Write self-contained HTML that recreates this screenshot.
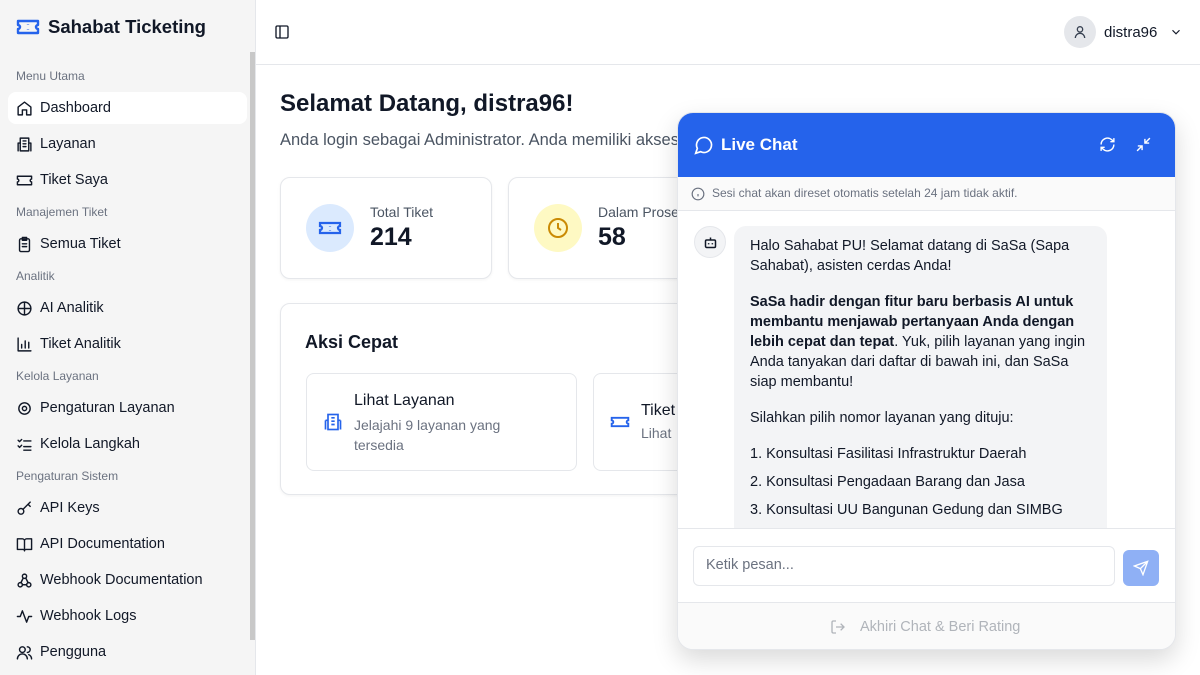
<!DOCTYPE html>
<html><head><meta charset="utf-8"><style>
*{box-sizing:border-box;margin:0;padding:0}
body{width:1200px;height:675px;overflow:hidden;font-family:"Liberation Sans",sans-serif;background:#fff;color:#111827;position:relative}
.sb{position:absolute;left:0;top:0;width:256px;height:675px;background:#f5f5f5;border-right:1px solid #e5e7eb}
.logo{position:absolute;left:16px;top:15px;font-size:18.5px;font-weight:bold;display:flex;align-items:center;gap:8px;color:#111827}
.scroll{position:absolute;left:250px;top:52px;width:5px;height:588px;background:#c8c8c8}
.sec{position:absolute;left:16px;font-size:12px;color:#6b7280}
.it{position:absolute;left:8px;width:239px;height:32px;display:flex;align-items:center;gap:7px;padding-left:8px;font-size:14.5px;color:#111827;border-radius:8px}
.it svg{width:17px;height:17px;fill:none;stroke:#111827;stroke-width:2;stroke-linecap:round;stroke-linejoin:round}
.act{background:#fff}
.top{position:absolute;left:256px;top:0;right:0;height:65px;border-bottom:1px solid #e5e7eb}
.card{position:absolute;border:1px solid #e5e7eb;border-radius:10px;background:#fff;box-shadow:0 1px 3px rgba(0,0,0,.05)}
.chat{position:absolute;left:677px;top:112px;width:499px;height:538px;border-radius:16px;background:#fff;box-shadow:0 10px 25px rgba(0,0,0,.15);overflow:hidden;border:1px solid #e5e7eb}
.bub{position:absolute;left:56px;width:373px;background:#f3f4f6;border-radius:12px;padding:10px 16px;font-size:14.5px;line-height:20px;color:#111827}
.bub p{margin-bottom:16px}
</style></head><body>
<div class="sb">
<div class="logo"><svg width="24" height="24" viewBox="0 0 24 24" fill="none" stroke="#2563eb" stroke-width="2.4" stroke-linejoin="round"><path d="M2 6h20v4a2 2 0 0 0 0 4v4H2v-4a2 2 0 0 0 0-4z"/><path d="M12 9v0.5M12 14.5v0.5"/></svg>Sahabat Ticketing</div>
<div class="scroll"></div>
<div class="sec" style="top:69px">Menu Utama</div>
<div class="it act" style="top:92px"><svg viewBox="0 0 24 24"><path d="M3 10l9-7 9 7v11h-6v-7h-6v7H3z"/></svg>Dashboard</div>
<div class="it" style="top:128px"><svg viewBox="0 0 24 24"><rect x="6" y="3" width="12" height="18"/><path d="M3 10h3M18 10h3M3 10v11M21 10v11M10 7h4M10 11h4M10 15h4"/></svg>Layanan</div>
<div class="it" style="top:164px"><svg viewBox="0 0 24 24"><path d="M2 6h20v4a2 2 0 0 0 0 4v4H2v-4a2 2 0 0 0 0-4z"/></svg>Tiket Saya</div>
<div class="sec" style="top:205px">Manajemen Tiket</div>
<div class="it" style="top:228px"><svg viewBox="0 0 24 24"><rect x="5" y="4" width="14" height="18" rx="2"/><rect x="9" y="2" width="6" height="4"/><path d="M9 11h6M9 15h6"/></svg>Semua Tiket</div>
<div class="sec" style="top:269px">Analitik</div>
<div class="it" style="top:292px"><svg viewBox="0 0 24 24"><circle cx="12" cy="12" r="9"/><path d="M12 3v18M3 12h18"/></svg>AI Analitik</div>
<div class="it" style="top:328px"><svg viewBox="0 0 24 24"><path d="M3 3v18h18M8 17v-5M13 17V7M18 17v-8"/></svg>Tiket Analitik</div>
<div class="sec" style="top:369px">Kelola Layanan</div>
<div class="it" style="top:392px"><svg viewBox="0 0 24 24"><circle cx="12" cy="12" r="3"/><circle cx="12" cy="12" r="8"/></svg>Pengaturan Layanan</div>
<div class="it" style="top:428px"><svg viewBox="0 0 24 24"><path d="M3 6l2 2 3-3M3 14l2 2 3-3M11 7h10M11 15h10M11 20h10"/></svg>Kelola Langkah</div>
<div class="sec" style="top:469px">Pengaturan Sistem</div>
<div class="it" style="top:492px"><svg viewBox="0 0 24 24"><circle cx="7" cy="16" r="4"/><path d="M10 13l10-10M17 6l3 3"/></svg>API Keys</div>
<div class="it" style="top:528px"><svg viewBox="0 0 24 24"><path d="M2 4h7a3 3 0 0 1 3 3v14a2 2 0 0 0-2-2H2zM22 4h-7a3 3 0 0 0-3 3v14a2 2 0 0 1 2-2h8z"/></svg>API Documentation</div>
<div class="it" style="top:564px"><svg viewBox="0 0 24 24"><circle cx="6" cy="18" r="3"/><circle cx="18" cy="18" r="3"/><circle cx="12" cy="6" r="3"/><path d="M9 18h6M10 9l-3 6M14 9l3 6"/></svg>Webhook Documentation</div>
<div class="it" style="top:600px"><svg viewBox="0 0 24 24"><path d="M2 12h4l3-8 6 16 3-8h4"/></svg>Webhook Logs</div>
<div class="it" style="top:636px"><svg viewBox="0 0 24 24"><circle cx="9" cy="8" r="4"/><path d="M2 21a7 7 0 0 1 14 0M16 4a4 4 0 0 1 0 8M22 21a7 7 0 0 0-4-6"/></svg>Pengguna</div>
</div>
<div class="top">
<svg style="position:absolute;left:18px;top:24px" width="16" height="16" viewBox="0 0 24 24" fill="none" stroke="#111827" stroke-width="2"><rect x="3" y="3" width="18" height="18" rx="2"/><path d="M9 3v18"/></svg>
<div style="position:absolute;left:808px;top:16px;width:32px;height:32px;border-radius:50%;background:#e5e7eb"><svg style="position:absolute;left:8px;top:8px" width="16" height="16" viewBox="0 0 24 24" fill="none" stroke="#374151" stroke-width="2"><circle cx="12" cy="8" r="4"/><path d="M5 21a7 7 0 0 1 14 0"/></svg></div>
<div style="position:absolute;left:848px;top:24px;font-size:15px;color:#111827">distra96</div>
<svg style="position:absolute;left:913px;top:25px" width="14" height="14" viewBox="0 0 24 24" fill="none" stroke="#111827" stroke-width="2"><path d="M6 9l6 6 6-6"/></svg>
</div>
<div style="position:absolute;left:280px;top:90px;font-size:24px;font-weight:bold">Selamat Datang, distra96!</div>
<div style="position:absolute;left:280px;top:131px;font-size:16.5px;color:#4b5563;white-space:nowrap">Anda login sebagai Administrator. Anda memiliki akses</div>
<div class="card" style="left:280px;top:177px;width:212px;height:102px">
<div style="position:absolute;left:25px;top:26px;width:48px;height:48px;border-radius:50%;background:#dbeafe"><svg style="position:absolute;left:12px;top:12px" width="24" height="24" viewBox="0 0 24 24" fill="none" stroke="#2563eb" stroke-width="2.2"><path d="M2 7h20v3a2 2 0 0 0 0 4v3H2v-3a2 2 0 0 0 0-4z"/><path d="M12 10v0.5M12 14v0.5"/></svg></div>
<div style="position:absolute;left:89px;top:26px;font-size:14px;color:#4b5563">Total Tiket</div>
<div style="position:absolute;left:89px;top:45px;font-size:25px;font-weight:bold">214</div></div>
<div class="card" style="left:508px;top:177px;width:200px;height:102px">
<div style="position:absolute;left:25px;top:26px;width:48px;height:48px;border-radius:50%;background:#fef9c3"><svg style="position:absolute;left:12px;top:12px" width="24" height="24" viewBox="0 0 24 24" fill="none" stroke="#ca8a04" stroke-width="2"><circle cx="12" cy="12" r="9"/><path d="M12 7v5l3 2"/></svg></div>
<div style="position:absolute;left:89px;top:26px;font-size:14px;color:#4b5563">Dalam Proses</div>
<div style="position:absolute;left:89px;top:45px;font-size:25px;font-weight:bold">58</div></div>
<div class="card" style="left:280px;top:303px;width:420px;height:192px">
<div style="position:absolute;left:24px;top:28px;font-size:18px;font-weight:bold;color:#111827">Aksi Cepat</div>
<div style="position:absolute;left:25px;top:69px;width:271px;height:98px;border:1px solid #e5e7eb;border-radius:8px">
<svg style="position:absolute;left:16px;top:38px" width="20" height="20" viewBox="0 0 24 24" fill="none" stroke="#2563eb" stroke-width="2"><rect x="6" y="3" width="12" height="18"/><path d="M3 10h3M18 10h3M3 10v11M21 10v11M10 7h4M10 11h4M10 15h4"/></svg>
<div style="position:absolute;left:47px;top:18px;font-size:16px">Lihat Layanan</div>
<div style="position:absolute;left:47px;top:41px;font-size:14px;color:#6b7280;line-height:20px;width:200px">Jelajahi 9 layanan yang tersedia</div></div>
<div style="position:absolute;left:312px;top:69px;width:120px;height:98px;border:1px solid #e5e7eb;border-radius:8px">
<svg style="position:absolute;left:16px;top:38px" width="20" height="20" viewBox="0 0 24 24" fill="none" stroke="#2563eb" stroke-width="2.2"><path d="M2 7h20v3a2 2 0 0 0 0 4v3H2v-3a2 2 0 0 0 0-4z"/></svg>
<div style="position:absolute;left:47px;top:28px;font-size:16px">Tiket</div>
<div style="position:absolute;left:47px;top:51px;font-size:14px;color:#6b7280">Lihat</div></div>
</div>
<div class="chat">
<div style="position:absolute;left:0;top:0;width:100%;height:64px;background:#2563eb">
<svg style="position:absolute;left:16px;top:22px" width="20" height="20" viewBox="0 0 24 24" fill="none" stroke="#fff" stroke-width="2"><path d="M7.9 20A9 9 0 1 0 4 16.1L2 22z"/></svg>
<div style="position:absolute;left:43px;top:22px;color:#fff;font-size:17px;font-weight:bold">Live Chat</div>
<svg style="position:absolute;left:421px;top:23px" width="17" height="17" viewBox="0 0 24 24" fill="none" stroke="#fff" stroke-width="2"><path d="M3 12a9 9 0 0 1 15-6.7L21 8M21 3v5h-5M21 12a9 9 0 0 1-15 6.7L3 16M3 21v-5h5"/></svg>
<svg style="position:absolute;left:457px;top:23px" width="17" height="17" viewBox="0 0 24 24" fill="none" stroke="#fff" stroke-width="2"><path d="M4 14h6v6M20 10h-6V4M14 10l7-7M3 21l7-7"/></svg></div>
<div style="position:absolute;left:0;top:64px;width:100%;height:34px;background:#fafafa;border-bottom:1px solid #e5e7eb">
<svg style="position:absolute;left:13px;top:10px" width="14" height="14" viewBox="0 0 24 24" fill="none" stroke="#6b7280" stroke-width="2"><circle cx="12" cy="12" r="10"/><path d="M12 16v-4M12 8h0"/></svg>
<div style="position:absolute;left:34px;top:9px;font-size:12px;color:#6b7280">Sesi chat akan direset otomatis setelah 24 jam tidak aktif.</div></div>
<div style="position:absolute;left:16px;top:113px;width:32px;height:32px;border-radius:50%;background:#f3f4f6;border:1px solid #e5e7eb"><svg style="position:absolute;left:8px;top:8px" width="15" height="15" viewBox="0 0 24 24" fill="none" stroke="#111827" stroke-width="2.4"><rect x="4" y="8" width="16" height="12" rx="2"/><path d="M12 8V4M9 13v2M15 13v2"/></svg></div>
<div class="bub" style="top:113px;height:340px"><p>Halo Sahabat PU! Selamat datang di SaSa (Sapa Sahabat), asisten cerdas Anda!</p><p><b>SaSa hadir dengan fitur baru berbasis AI untuk membantu menjawab pertanyaan Anda dengan lebih cepat dan tepat</b>. Yuk, pilih layanan yang ingin Anda tanyakan dari daftar di bawah ini, dan SaSa siap membantu!</p><p>Silahkan pilih nomor layanan yang dituju:</p><div style="margin-bottom:8px">1. Konsultasi Fasilitasi Infrastruktur Daerah</div><div style="margin-bottom:8px">2. Konsultasi Pengadaan Barang dan Jasa</div><div>3. Konsultasi UU Bangunan Gedung dan SIMBG</div></div>
<div style="position:absolute;left:0;top:415px;width:100%;height:75px;background:#fff;border-top:1px solid #e5e7eb">
<div style="position:absolute;left:15px;top:17px;width:422px;height:40px;border:1px solid #e5e7eb;border-radius:6px;font-size:14.5px;color:#6b7280;padding:10px 12px">Ketik pesan...</div>
<div style="position:absolute;left:445px;top:21px;width:36px;height:36px;border-radius:6px;background:#8fb0f5"><svg style="position:absolute;left:10px;top:10px" width="16" height="16" viewBox="0 0 24 24" fill="none" stroke="#fff" stroke-width="2"><path d="M22 2L11 13M22 2l-7 20-4-9-9-4z"/></svg></div></div>
<div style="position:absolute;left:0;top:489px;width:100%;height:49px;background:#fafafa;border-top:1px solid #e5e7eb">
<svg style="position:absolute;left:152px;top:16px" width="16" height="16" viewBox="0 0 24 24" fill="none" stroke="#b0b4ba" stroke-width="2"><path d="M9 21H5a2 2 0 0 1-2-2V5a2 2 0 0 1 2-2h4M16 17l5-5-5-5M21 12H9"/></svg>
<div style="position:absolute;left:182px;top:16px;font-size:14.5px;color:#b0b4ba">Akhiri Chat &amp; Beri Rating</div></div>
</div>
</body></html>
